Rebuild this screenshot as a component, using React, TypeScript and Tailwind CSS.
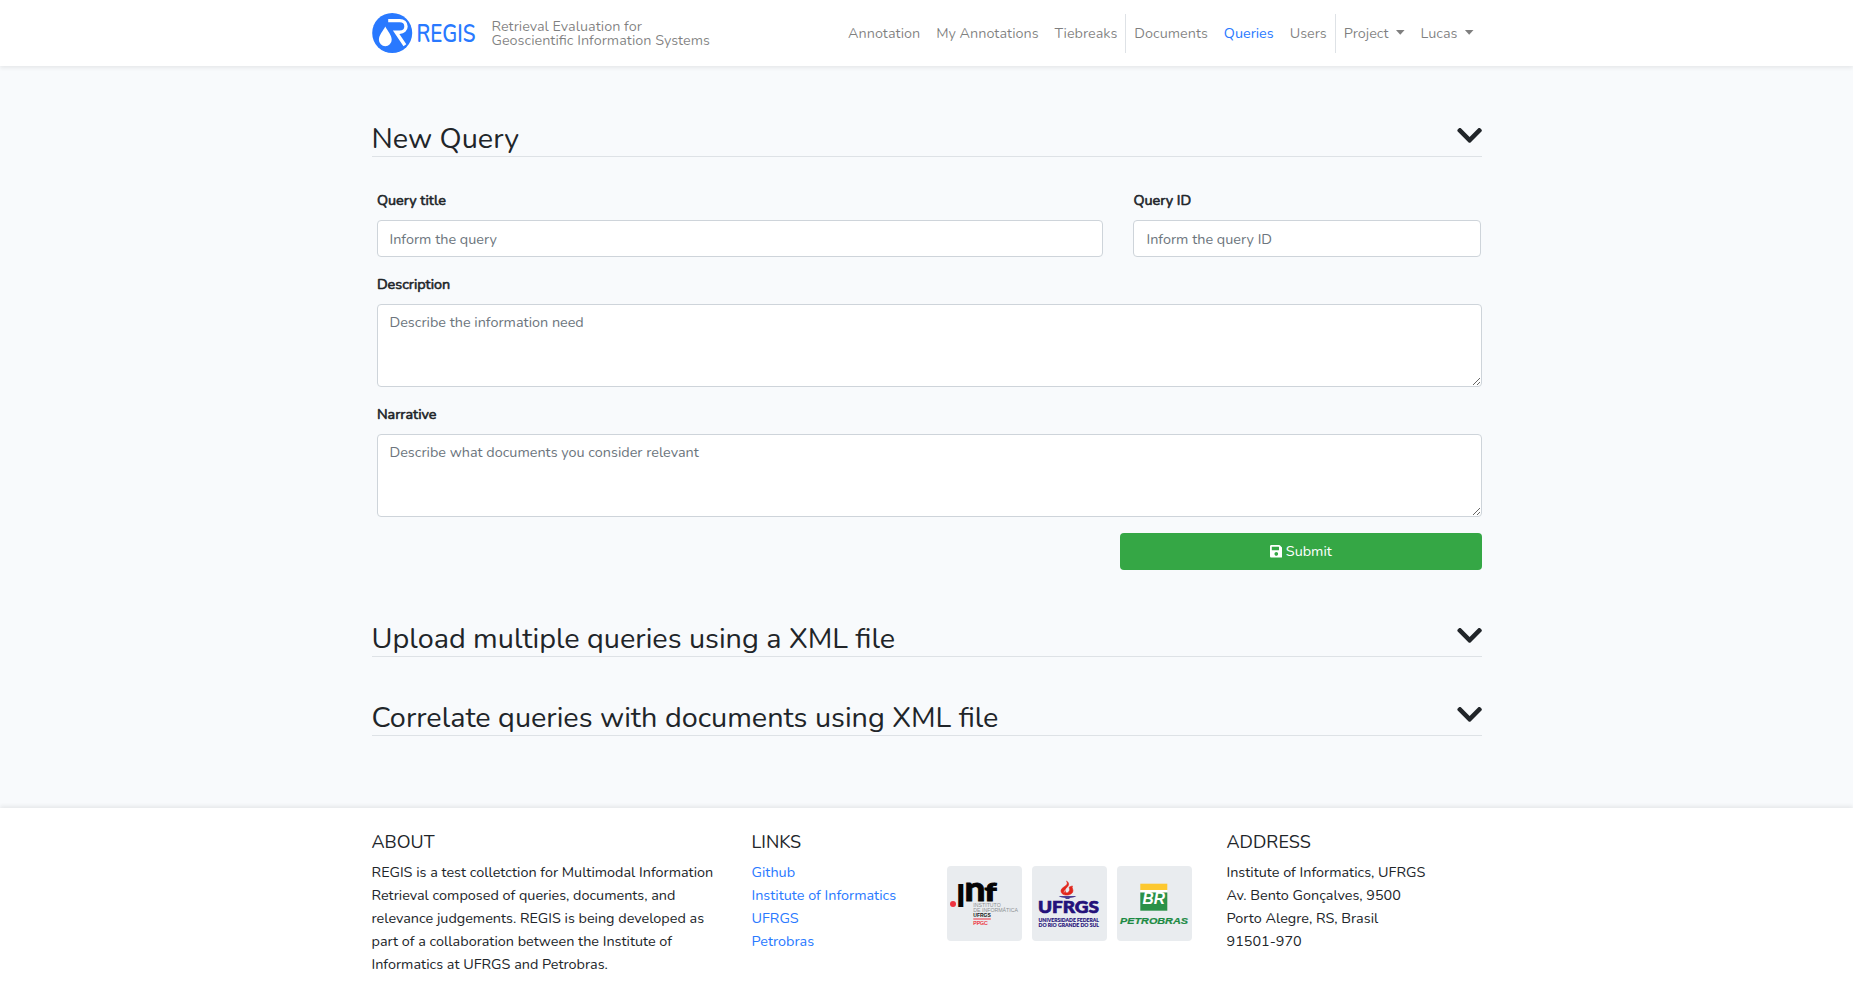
import type { ReactNode } from "react";
import { FaChevronDown, FaSave } from "react-icons/fa";

function Brand() {
  return (
    <a className="flex items-center">
      <svg width="104" height="42" viewBox="0 0 104 42" className="block">
        <circle cx="20.2" cy="21" r="20" fill="#2979ff" />
        <path d="M16.2 8.600H27.700c3.900 0 6.300 2.500 6.300 5.800s-2.600 5.800-6.300 5.800h-3.600L32.900 33.200" fill="none" stroke="#fff" strokeWidth="3.400" />
        <path d="M13.300 14.500c-2.300 4.700-6.400 8.400-6.400 13.300a6.400 6.400 0 0 0 12.800 0c0-4.900-4.100-8.600-6.400-13.300z" fill="#fff" />
        <text x="44.500" y="29.800" fontFamily="Nunito" fontWeight="600" fontSize="25" fill="#2979ff" textLength="59" lengthAdjust="spacingAndGlyphs">REGIS</text>
      </svg>
      <span className="ml-4 text-[14.4px] leading-none text-black/50">
        Retrieval Evaluation for
        <br />
        Geoscientific Information Systems
      </span>
    </a>
  );
}

function NavItem({ label, active, divider, menu }: { label: string; active?: boolean; divider?: boolean; menu?: boolean }) {
  return (
    <li className={divider ? "border-r border-[#dee2e6]" : ""}>
      <a className={`block px-2 pt-[8.5px] pb-[7.5px] whitespace-nowrap ${active ? "text-[#2979ff]" : "text-black/50"}`}>
        {label}
        {menu && (
          <>
            {" "}
            <span className="ml-[0.255em] inline-block h-[4.8px] w-[8.64px] bg-current align-[0.255em] [clip-path:polygon(0_0,100%_0,50%_100%)]" />
          </>
        )}
      </a>
    </li>
  );
}

function SectionHeader({ children }: { children: ReactNode }) {
  return (
    <div className="flex h-9 items-start justify-between border-b border-[#dee2e6] text-[28.8px] leading-[34.56px]">
      <h2 className="pt-px">{children}</h2>
      <FaChevronDown className="-mr-[0.4px] h-[28.8px] w-[25.2px]" />
    </div>
  );
}

const field =
  "block w-full rounded border border-[#ced4da] bg-white px-3 text-[14.4px] leading-[23.04px] text-[#495057] placeholder:text-[#6c757d]";

function Label({ children }: { children: ReactNode }) {
  return <label className="-mt-[0.5px] mb-[8.5px] block pl-[0.4px] [-webkit-text-stroke:0.6px_#212529]">{children}</label>;
}

function Tile({ children }: { children: ReactNode }) {
  return (
    <div className="size-[75px] rounded bg-[#e9ecef]">
      <svg viewBox="0 0 75 75" className="block size-[75px]">{children}</svg>
    </div>
  );
}

const fit = "spacingAndGlyphs";

function Logos() {
  return (
    <div className="flex gap-2.5 pt-[34px]">
      <Tile>
        <circle cx="6" cy="38" r="3" fill="#ee3340" />
        <g fontFamily="Lato" fontWeight="900" fill="#050505">
          <text x="9" y="40.500" fontSize="44" textLength="9.500" lengthAdjust={fit}>ı</text>
          <text x="17.500" y="34.500" fontSize="34" stroke="#050505" strokeWidth=".8" textLength="21" lengthAdjust={fit}>n</text>
          <text x="37.500" y="34.500" fontSize="25" stroke="#050505" strokeWidth="1" textLength="12" lengthAdjust={fit}>f</text>
        </g>
        <g fontFamily="Liberation Sans" fontSize="4.800">
          <text x="26.300" y="40.600" fill="#8d9092" textLength="27.500" lengthAdjust={fit}>INSTITUTO</text>
          <text x="26.300" y="45.600" fill="#8d9092" textLength="44.700" lengthAdjust={fit}>DE INFORMÁTICA</text>
          <text x="26.300" y="51" fontWeight="700" fill="#111" textLength="17.500" lengthAdjust={fit}>UFRGS</text>
          <text x="26.300" y="58.700" fill="#ee3340" stroke="#ee3340" strokeWidth=".2" textLength="14.500" lengthAdjust={fit}>PPGC</text>
        </g>
        <path d="M26.300 53h17.500" stroke="#ee3340" strokeWidth="1" />
      </Tile>
      <Tile>
        <path d="M34.500 15c4 2.500 1.500 5.500-.5 7.500-1.500 1.800-1 3.500.8 4.500 2.200-.8 3.700-3 2.200-5.500 1-1 2.300-1.300 3.500-1.500-1.300 1.700 1.800 4.200-.2 6.800-1.400 1.600-3.500 2.300-5.700 2.300-4 0-6-2.300-5.500-5 .5-2.500 4.900-3.800 5.900-5.900.5-1.200 0-2.200-.5-3.200z" fill="#e1261c" stroke="#e1261c" strokeWidth=".6" />
        <path d="M32 26.500c.2-2.300 3-3.500 4-5.500" fill="none" stroke="#e9ecef" strokeWidth=".6" />
        <path d="M26.700 30h17.600c-2 1.600-5 1.600-6.800 2v1h-4v-1c-1.800-.4-4.800-.4-6.800-2z" fill="#4a3f94" />
        <g fontFamily="Lato" fontWeight="900" fill="#24127a" stroke="#24127a">
          <text x="6" y="47.200" fontSize="17.300" strokeWidth=".7" textLength="61" lengthAdjust={fit}>UFRGS</text>
          <text x="6.500" y="56.200" fontSize="5" strokeWidth=".1" textLength="60.500" lengthAdjust={fit}>UNIVERSIDADE FEDERAL</text>
          <text x="6.500" y="61.200" fontSize="5" strokeWidth=".1" textLength="60.500" lengthAdjust={fit}>DO RIO GRANDE DO SUL</text>
        </g>
      </Tile>
      <Tile>
        <path d="M23.300 17.700h27v6.300h-27z" fill="#fdc82f" />
        <path d="M23.300 24h27v2.500h-27z" fill="#fff" />
        <path d="M23.300 26.500h27v18.200h-27z" fill="#2b9148" />
        <g fontFamily="Liberation Sans" fontWeight="700" fontStyle="italic">
          <text x="25.500" y="37.600" fontSize="16" fill="#fff" textLength="22.500" lengthAdjust={fit}>BR</text>
          <text x="3" y="57.700" fontSize="9" fill="#1c8a43" stroke="#1c8a43" strokeWidth=".2" textLength="68" lengthAdjust={fit}>PETROBRAS</text>
        </g>
      </Tile>
    </div>
  );
}

export default function App() {
  return (
    <div className="flex min-h-screen flex-col bg-[#f8fafc] font-['Nunito','Lato',sans-serif] text-[14.4px] leading-[23.04px] text-[#212529]">
      <header className="relative h-[66px] bg-white shadow-[0_2px_4px_rgba(0,0,0,0.075)]">
        <div className="mx-auto flex h-full w-[1110px] items-center justify-between">
          <Brand />
          <ul className="flex pt-px">
            <NavItem label="Annotation" />
            <NavItem label="My Annotations" />
            <NavItem label="Tiebreaks" divider />
            <NavItem label="Documents" />
            <NavItem label="Queries" active />
            <NavItem label="Users" divider />
            <NavItem label="Project" menu />
            <NavItem label="Lucas" menu />
          </ul>
        </div>
      </header>

      <main className="mx-auto w-[1110px] flex-1 pt-[55px]">
        <SectionHeader>New Query</SectionHeader>
        <form className="flex flex-col gap-4 pt-8 pl-[5px]">
          <div className="flex gap-[30px]">
            <div className="w-[726px]">
              <Label>Query title</Label>
              <input className={`${field} h-[37px] pt-[6px] pb-[5px]`} placeholder="Inform the query" />
            </div>
            <div className="w-[348px] pl-[0.5px]">
              <Label>Query ID</Label>
              <input className={`${field} h-[37px] pt-[6px] pr-3 pb-[5px] pl-[12.5px]`} placeholder="Inform the query ID" />
            </div>
          </div>
          <div>
            <Label>Description</Label>
            <textarea rows={3} className={`${field} py-1.5`} placeholder="Describe the information need" />
          </div>
          <div>
            <Label>Narrative</Label>
            <textarea rows={3} className={`${field} py-1.5`} placeholder="Describe what documents you consider relevant" />
          </div>
          <button type="button" className="flex h-[37px] w-[362px] items-center justify-center gap-[3.5px] self-end rounded bg-[#35a745] pl-[0.5px] text-white">
            <FaSave className="mb-[2px] h-[14.4px] w-[12.6px]" />
            Submit
          </button>
        </form>
        <div className="flex flex-col gap-[43px] pt-[51px]">
          <SectionHeader>Upload multiple queries using a XML file</SectionHeader>
          <SectionHeader>Correlate queries with documents using XML file</SectionHeader>
        </div>
      </main>

      <footer className="h-[194px] bg-white shadow-[0_-2px_4px_rgba(0,0,0,0.075)]">
        <div className="mx-auto flex w-[1110px] pt-6">
          <section className="w-[380px] pr-[30px]">
            <h5 className="mb-[7px] text-[18px] leading-[21.6px]">ABOUT</h5>
            <p>
              REGIS is a test colletction for Multimodal Information Retrieval composed of queries, documents, and relevance
              judgements. REGIS is being developed as part of a collaboration between the Institute of Informatics at UFRGS and
              Petrobras.
            </p>
          </section>
          <section className="w-[195.500px]">
            <h5 className="mb-[7px] text-[18px] leading-[21.6px]">LINKS</h5>
            <ul className="text-[#2979ff]">
              <li>Github</li>
              <li>Institute of Informatics</li>
              <li>UFRGS</li>
              <li>Petrobras</li>
            </ul>
          </section>
          <div className="w-[279.500px]">
            <Logos />
          </div>
          <address className="not-italic">
            <h5 className="mb-[7px] text-[18px] leading-[21.6px]">ADDRESS</h5>
            Institute of Informatics, UFRGS
            <br />
            Av. Bento Gonçalves, 9500
            <br />
            Porto Alegre, RS, Brasil
            <br />
            91501-970
          </address>
        </div>
      </footer>
    </div>
  );
}
